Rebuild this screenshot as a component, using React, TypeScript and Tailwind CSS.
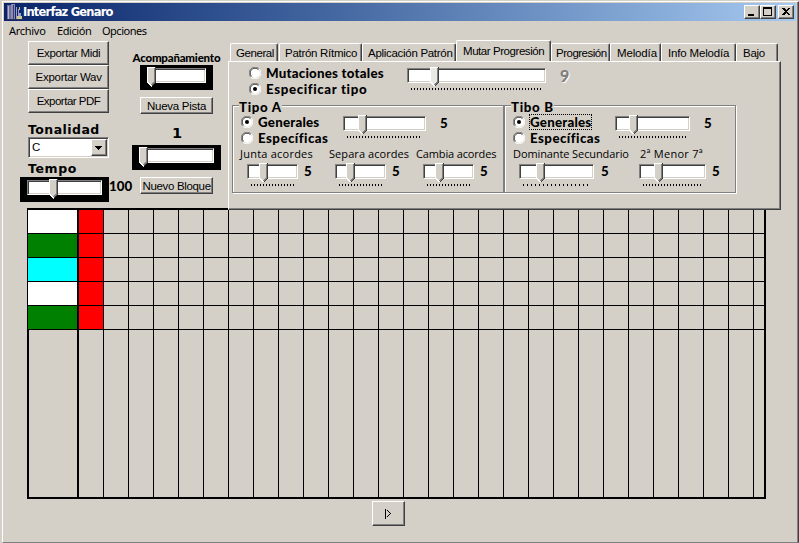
import { useLayoutEffect, useRef, useState, type ReactNode } from "react";

const SANS = "font-['Liberation_Sans',sans-serif] text-[11.5px]";
const TAHOMA = "font-['Noto_Sans',sans-serif] text-[11px]";
const VERDANA = "font-['DejaVu_Sans',sans-serif] font-bold text-[12.5px]";
const COMIC = "font-['Comic_Sans_MS','Lato',sans-serif] font-black text-[13.3px]";
const COMIC_THIN = "font-['Comic_Sans_MS','Open_Sans',sans-serif] text-[11px]";

/** Single line label whose letter spacing is tuned to fill `w` pixels. */
function Label({ w, className = "", children }: { w: number; className?: string; children: string }) {
  const ref = useRef<HTMLSpanElement>(null);
  const [gap, setGap] = useState(0);
  useLayoutEffect(() => {
    const natural = ref.current!.offsetWidth - gap * children.length;
    setGap((w - natural) / children.length);
  }, [w, children]);
  return (
    <span className={`block shrink-0 whitespace-nowrap leading-3 ${className}`} style={{ width: w }}>
      <span ref={ref} style={{ letterSpacing: gap }}>{children}</span>
    </span>
  );
}

function Button({ className = "", children }: { className?: string; children: ReactNode }) {
  return (
    <button
      className={`flex shrink-0 items-center justify-center border border-t-white border-l-white border-r-[#404040] border-b-[#404040] bg-[#d4d0c8] shadow-[inset_-1px_-1px_0_#808080] ${className}`}
    >
      {children}
    </button>
  );
}

type SliderProps = { w: number; at: number; dark?: boolean; disabled?: boolean; pitch?: string; className?: string };

function Slider({ w, at, dark, disabled, pitch = "bg-[repeating-linear-gradient(90deg,#000_0_1px,transparent_1px_3px)]", className = "" }: SliderProps) {
  return (
    <div className={`relative h-[25px] shrink-0 px-[7px] pt-[3px] ${dark ? "bg-black" : ""} ${className}`} style={{ width: w }}>
      <div className="h-[15px] border border-t-[#808080] border-l-[#808080] border-r-white border-b-white bg-white shadow-[inset_1px_1px_0_#404040,inset_-1px_-1px_0_#d4d0c8]" />
      {!dark && <div className={`mx-1 mt-[5px] h-[2px] ${pitch}`} />}
      <svg className="absolute top-[2px]" style={{ left: at }} width="9" height="20" viewBox="0 0 9 20" shapeRendering="crispEdges">
        <path d="M0 0H9V15L4.5 20L0 15Z" fill={disabled ? "#ebe9e4" : "#d4d0c8"} />
        <path d="M8.500 0V15L4.500 19.500" fill="none" stroke="#404040" />
        <path d="M7.500 1V15L4.500 18" fill="none" stroke="#808080" />
        <path d="M8 .5H.5V15L4.500 19" fill="none" stroke="#fff" />
      </svg>
    </div>
  );
}

function Radio({ on }: { on?: boolean }) {
  return (
    <svg className="shrink-0" width="12" height="12" viewBox="0 0 12 12">
      <circle cx="6" cy="6" r="5" fill="#fff" />
      <path d="M1.800 10.200A5.500 5.500 0 0 1 10.200 1.800" fill="none" stroke="#808080" />
      <path d="M2.600 9.400A4.500 4.500 0 0 1 9.400 2.600" fill="none" stroke="#404040" />
      <path d="M10.200 1.800A5.500 5.500 0 0 1 1.800 10.200" fill="none" stroke="#fff" />
      {on && <circle cx="6" cy="6" r="2" fill="#000" />}
    </svg>
  );
}

function Five({ className = "" }: { className?: string }) {
  return <Label w={8} className={`${COMIC} ${className}`}>5</Label>;
}

function TitleBar() {
  return (
    <header className="flex h-[18px] w-[792px] items-center bg-linear-to-r from-[#0a246a] to-[#a6caf0] pl-[2px] pr-[2px]">
      <svg width="17" height="16" viewBox="0 0 17 16" shapeRendering="crispEdges">
        <path d="M1 1h4v14H1z" fill="#6f6f9c" />
        <path d="M2 2h1v13H2z" fill="#b4b4d8" />
        <path d="M5 0h4v15H5z" fill="#8a8ab4" />
        <path d="M7 1h1v14H7z" fill="#3c3c70" />
        <path d="M10 3h1v12h-1zM12 5h1v4h2v6h-3z" fill="#9c9cc4" />
        <path d="M13 3h1v3h-1zM11 12h5v3h-5z" fill="#c8c890" />
        <path d="M0 15h17v1H0z" fill="#303060" />
      </svg>
      <Label w={90} className="font-['DejaVu_Sans',sans-serif] text-[11.5px] font-bold text-white">Interfaz Genaro</Label>
      <div className="ml-auto flex">
        <Button className="h-[14px] w-4">
          <svg width="12" height="10" shapeRendering="crispEdges"><path d="M2 7h6v2H2z" /></svg>
        </Button>
        <Button className="h-[14px] w-4">
          <svg width="12" height="10" shapeRendering="crispEdges"><path d="M1 0h9v9H1zM2 2v6h7V2z" fillRule="evenodd" /></svg>
        </Button>
        <Button className="ml-[2px] h-[14px] w-4">
          <svg width="12" height="10" shapeRendering="crispEdges"><path d="M2 1h2l2 2 2-2h2L7 4.500 10 8H8L6 6 4 8H2l3-3.500z" /></svg>
        </Button>
      </div>
    </header>
  );
}

function ExportColumn() {
  return (
    <div className="w-[112px] shrink-0 pl-2 pt-px">
      <Button className="h-6 w-[81px]"><Label w={64} className={SANS}>Exportar Midi</Label></Button>
      <Button className="h-6 w-[81px]"><Label w={66} className={SANS}>Exportar Wav</Label></Button>
      <Button className="h-6 w-[81px]"><Label w={64} className={SANS}>Exportar PDF</Label></Button>
      <Label w={72} className={`mt-[11px] ${VERDANA}`}>Tonalidad</Label>
      <div className="mt-px flex h-[21px] w-[81px] border border-t-[#808080] border-l-[#808080] border-r-white border-b-white bg-white p-[1px] shadow-[inset_1px_1px_0_#404040,inset_-1px_-1px_0_#d4d0c8]">
        <Label w={9} className={`ml-[2px] mt-[2px] ${SANS}`}>C</Label>
        <Button className="ml-auto h-[17px] w-4">
          <svg width="8" height="4" shapeRendering="crispEdges"><path d="M0 0h7v1H0zM1 1h5v1H1zM2 2h3v1H2zM3 3h1v1H3z" /></svg>
        </Button>
      </div>
      <Label w={49} className={`mt-[5px] ${VERDANA}`}>Tempo</Label>
      <div className="-ml-2 mt-[2px] flex">
        <Slider w={89} at={29} dark />
        <Label w={23} className={`mt-[3px] ${COMIC}`}>100</Label>
      </div>
    </div>
  );
}

function TrackColumn() {
  return (
    <div className="flex w-[89px] shrink-0 flex-col items-center pt-[12px]">
      <Label w={88} className="font-['Lato',sans-serif] text-[11.5px] font-black">Acompañamiento</Label>
      <Slider w={73} at={7} dark className="mt-px" />
      <Button className="mt-[7px] h-[17px] w-[73px]"><Label w={59} className={SANS}>Nueva Pista</Label></Button>
      <Label w={9} className="mt-[13px] font-['DejaVu_Sans',sans-serif] text-[14.5px] font-bold">1</Label>
      <Slider w={89} at={7} dark className="mt-[6px]" />
      <Button className="mt-[7px] h-[17px] w-[73px]"><Label w={68} className={SANS}>Nuevo Bloque</Label></Button>
    </div>
  );
}

function Tab({ box, w, children }: { box: string; w: number; children: string }) {
  return (
    <div className={`flex h-[18px] shrink-0 items-center rounded-t-[2px] border border-b-0 border-t-white border-l-white border-r-[#404040] shadow-[inset_-1px_0_0_#808080] ${box}`}>
      <Label w={w} className={SANS}>{children}</Label>
    </div>
  );
}

function Tabs() {
  return (
    <nav className="flex h-[21px] items-end pl-[2px]">
      <Tab box="w-[48px] pl-[5px]" w={38}>General</Tab>
      <Tab box="ml-px w-[83px] pl-[5px]" w={72}>Patrón Rítmico</Tab>
      <Tab box="w-[94px] pl-[5px]" w={85}>Aplicación Patrón</Tab>
      <div className="relative -mb-px flex h-[22px] w-[95px] shrink-0 items-center rounded-t-[2px] border border-b-0 border-t-white border-l-white border-r-[#404040] bg-[#d4d0c8] pb-[2px] pl-[6px] shadow-[inset_-1px_0_0_#808080]">
        <Label w={81} className={SANS}>Mutar Progresión</Label>
      </div>
      <Tab box="w-[59px] pl-[4px]" w={51}>Progresión</Tab>
      <Tab box="w-[51px] pl-[6px]" w={40}>Melodía</Tab>
      <Tab box="w-[75px] pl-[6px]" w={61}>Info Melodía</Tab>
      <Tab box="w-[42px] pl-[6px]" w={22}>Bajo</Tab>
    </nav>
  );
}

function GroupBox({ title, width, children }: { title: string; width: string; children: ReactNode }) {
  return (
    <section className={`h-[88px] shrink-0 border border-[#808080] shadow-[1px_1px_0_#fff,inset_1px_1px_0_#fff] ${width}`}>
      <div className="-mt-[5px] ml-[6px] w-fit bg-[#d4d0c8]">
        <Label w={43} className={COMIC}>{title}</Label>
      </div>
      {children}
    </section>
  );
}

function ScopeRadios({ focused }: { focused?: boolean }) {
  return (
    <div className="flex shrink-0 flex-col gap-1 pt-[3px]">
      <div className="flex h-3 items-center gap-[5px]">
        <Radio on />
        <div className={focused ? "-m-px border border-dotted border-black pb-px pt-px" : ""}>
          <Label w={61} className={COMIC}>Generales</Label>
        </div>
      </div>
      <div className="flex h-3 items-center gap-[5px]">
        <Radio />
        <Label w={70} className={COMIC}>Específicas</Label>
      </div>
    </div>
  );
}

function MutationPanel() {
  return (
    <div className="relative h-[149px] w-[553px] border border-t-white border-l-white border-r-[#404040] border-b-[#404040] bg-[#d4d0c8] pl-[3px] pt-[3px] shadow-[inset_-1px_-1px_0_#808080]">
      <div className="flex h-10 pl-[17px]">
        <div className="flex w-[151px] flex-col gap-1 pt-[2px]">
          <div className="flex h-3 items-center gap-[5px]"><Radio /><Label w={118} className={COMIC}>Mutaciones totales</Label></div>
          <div className="flex h-3 items-center gap-[5px]"><Radio on /><Label w={101} className={COMIC}>Especificar tipo</Label></div>
        </div>
        <Slider w={153} at={30} disabled pitch="bg-[repeating-linear-gradient(90deg,#000_0_1px,transparent_1px_3px)]" />
        <Label w={10} className="ml-[7px] mt-[5px] font-['Comic_Sans_MS','Lato',sans-serif] text-[16px] font-black text-[#808080] [text-shadow:1px_1px_0_#fff]">9</Label>
      </div>
      <div className="flex">
        <GroupBox title="Tipo A" width="w-[272px]">
          <div className="flex h-[35px] pl-2">
            <ScopeRadios />
            <Slider w={97} at={22} className="ml-[8px]" />
            <Five className="ml-[7px] mt-[4px]" />
          </div>
          <div className="flex pl-[7px]">
            <Label w={73} className={COMIC_THIN}>Junta acordes</Label>
            <Label w={80} className={`ml-4 ${COMIC_THIN}`}>Separa acordes</Label>
            <Label w={80} className={`ml-[7px] ${COMIC_THIN}`}>Cambia acordes</Label>
          </div>
          <div className="flex pl-[7px] pt-px">
            <Slider w={65} at={19} /><Five className="mt-[4px] -ml-px" />
            <Slider w={65} at={18} className="ml-4" /><Five className="mt-[4px] -ml-px" />
            <Slider w={65} at={19} className="ml-4" /><Five className="mt-[4px] -ml-px" />
          </div>
        </GroupBox>
        <GroupBox title="Tibo B" width="w-[232px]">
          <div className="flex h-[35px] pl-2">
            <ScopeRadios focused />
            <Slider w={89} at={21} className="ml-[8px]" />
            <Five className="ml-[7px] mt-[4px]" />
          </div>
          <div className="flex pl-[8px]">
            <Label w={116} className={COMIC_THIN}>Dominante Secundario</Label>
            <Label w={63} className={`ml-[11px] ${COMIC_THIN}`}>2ª Menor 7ª</Label>
          </div>
          <div className="flex pl-[7px] pt-px">
            <Slider w={89} at={24} pitch="bg-[repeating-linear-gradient(90deg,#000_0_1px,transparent_1px_4px)]" />
            <Five className="mt-[4px]" />
            <Slider w={81} at={22} className="ml-[23px]" /><Five className="mt-[4px] -ml-px" />
          </div>
        </GroupBox>
      </div>
    </div>
  );
}

const TRACKS = ["bg-white", "bg-[#008000]", "bg-[#00ffff]", "bg-white", "bg-[#008000]"];

function BlockGrid() {
  const columns = Array.from({ length: 27 }, (_, i) => i);
  return (
    <div className="ml-[23px] flex h-[291px] w-[739px] border-2 border-l border-black">
      <div className="flex w-[51px] shrink-0 flex-col border-r-2 border-black">
        {TRACKS.map((c, i) => <div key={i} className={`h-6 shrink-0 border-b border-black ${c}`} />)}
        <div className="grow border-l border-black" />
      </div>
      {columns.map((col) => (
        <div key={col} className="w-[25px] shrink-0 border-r border-black">
          {TRACKS.map((_, i) => <div key={i} className={`h-6 border-b border-black ${col === 0 ? "bg-[#ff0000]" : ""}`} />)}
        </div>
      ))}
      <div className="grow">
        {TRACKS.map((_, i) => <div key={i} className="h-6 border-b border-black" />)}
      </div>
    </div>
  );
}

export default function App() {
  return (
    <div className="h-[543px] w-[799px] overflow-hidden bg-[#d4d0c8] pl-[2px] pt-px text-black">
      <div className="h-[542px] border border-t-white border-l-white border-r-[#404040] border-b-[#808080] pl-px pt-px shadow-[inset_-1px_0_0_#808080]">
        <TitleBar />
        <div className="flex h-[19px] items-center pl-[5px]">
          <Label w={37} className={TAHOMA}>Archivo</Label>
          <Label w={34} className={`ml-[11px] ${TAHOMA}`}>Edición</Label>
          <Label w={44} className={`ml-[11px] ${TAHOMA}`}>Opciones</Label>
        </div>
        <main className="flex h-[168px] pl-4">
          <ExportColumn />
          <TrackColumn />
          <div className="ml-[7px]">
            <Tabs />
            <MutationPanel />
          </div>
        </main>
        <BlockGrid />
        <Button className="ml-[368px] mt-[2px] h-[25px] w-[33px]">
          <svg width="7" height="10" viewBox="0 0 7 10" shapeRendering="crispEdges">
            <path d="M0 0h1v10H0zM2 1h1v1H2zM3 2h1v1H3zM4 3h1v1H4zM5 4h1v1H5zM4 5h1v1H4zM3 6h1v1H3zM2 7h1v1H2z" />
          </svg>
        </Button>
      </div>
    </div>
  );
}
